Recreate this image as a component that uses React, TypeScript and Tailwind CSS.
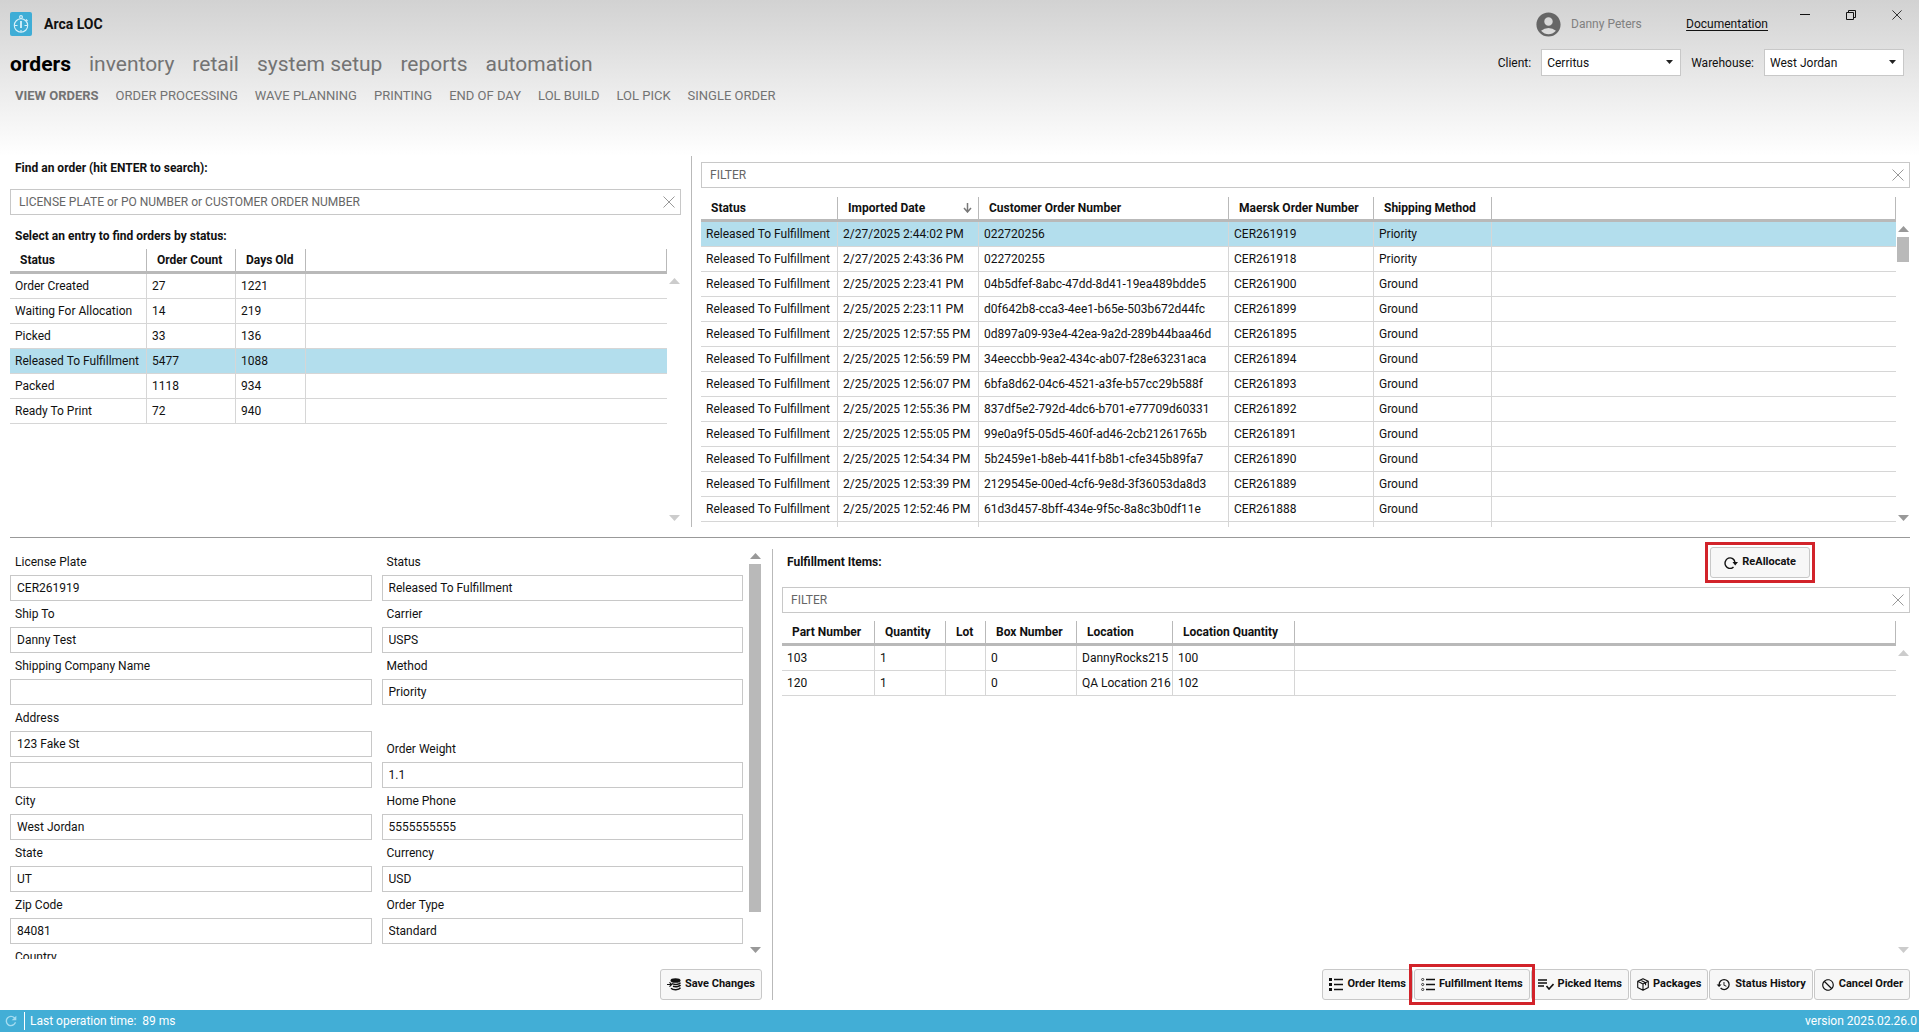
import React, { useId } from 'react';
import { MdAccountCircle, MdBlock, MdHistory, MdRefresh } from 'react-icons/md';

type Column = { label: string; width: string; sorted?: boolean };

const mainNav = ['orders', 'inventory', 'retail', 'system setup', 'reports', 'automation'];

const subNav = [
  'VIEW ORDERS',
  'ORDER PROCESSING',
  'WAVE PLANNING',
  'PRINTING',
  'END OF DAY',
  'LOL BUILD',
  'LOL PICK',
  'SINGLE ORDER',
];

const statusColumns: Column[] = [
  { label: 'Status', width: 'w-[137px]' },
  { label: 'Order Count', width: 'w-[89px]' },
  { label: 'Days Old', width: 'w-[70px]' },
];

const statusRows = [
  ['Order Created', '27', '1221'],
  ['Waiting For Allocation', '14', '219'],
  ['Picked', '33', '136'],
  ['Released To Fulfillment', '5477', '1088'],
  ['Packed', '1118', '934'],
  ['Ready To Print', '72', '940'],
];

const orderColumns: Column[] = [
  { label: 'Status', width: 'w-[137px]' },
  { label: 'Imported Date', width: 'w-[141px]', sorted: true },
  { label: 'Customer Order Number', width: 'w-[250px]' },
  { label: 'Maersk Order Number', width: 'w-[145px]' },
  { label: 'Shipping Method', width: 'w-[118px]' },
];

const orderRows = [
  ['Released To Fulfillment', '2/27/2025 2:44:02 PM', '022720256', 'CER261919', 'Priority'],
  ['Released To Fulfillment', '2/27/2025 2:43:36 PM', '022720255', 'CER261918', 'Priority'],
  ['Released To Fulfillment', '2/25/2025 2:23:41 PM', '04b5dfef-8abc-47dd-8d41-19ea489bdde5', 'CER261900', 'Ground'],
  ['Released To Fulfillment', '2/25/2025 2:23:11 PM', 'd0f642b8-cca3-4ee1-b65e-503b672d44fc', 'CER261899', 'Ground'],
  ['Released To Fulfillment', '2/25/2025 12:57:55 PM', '0d897a09-93e4-42ea-9a2d-289b44baa46d', 'CER261895', 'Ground'],
  ['Released To Fulfillment', '2/25/2025 12:56:59 PM', '34eeccbb-9ea2-434c-ab07-f28e63231aca', 'CER261894', 'Ground'],
  ['Released To Fulfillment', '2/25/2025 12:56:07 PM', '6bfa8d62-04c6-4521-a3fe-b57cc29b588f', 'CER261893', 'Ground'],
  ['Released To Fulfillment', '2/25/2025 12:55:36 PM', '837df5e2-792d-4dc6-b701-e77709d60331', 'CER261892', 'Ground'],
  ['Released To Fulfillment', '2/25/2025 12:55:05 PM', '99e0a9f5-05d5-460f-ad46-2cb21261765b', 'CER261891', 'Ground'],
  ['Released To Fulfillment', '2/25/2025 12:54:34 PM', '5b2459e1-b8eb-441f-b8b1-cfe345b89fa7', 'CER261890', 'Ground'],
  ['Released To Fulfillment', '2/25/2025 12:53:39 PM', '2129545e-00ed-4cf6-9e8d-3f36053da8d3', 'CER261889', 'Ground'],
  ['Released To Fulfillment', '2/25/2025 12:52:46 PM', '61d3d457-8bff-434e-9f5c-8a8c3b0df11e', 'CER261888', 'Ground'],
  ['', '', '', '', ''],
];

const itemColumns: Column[] = [
  { label: 'Part Number', width: 'w-[93px]' },
  { label: 'Quantity', width: 'w-[71px]' },
  { label: 'Lot', width: 'w-[40px]' },
  { label: 'Box Number', width: 'w-[91px]' },
  { label: 'Location', width: 'w-[96px]' },
  { label: 'Location Quantity', width: 'w-[122px]' },
];

const itemRows = [
  ['103', '1', '', '0', 'DannyRocks215', '100'],
  ['120', '1', '', '0', 'QA Location 216', '102'],
];

function LogoIcon() {
  return (
    <svg width="22" height="24" viewBox="0 0 22 24" aria-hidden="true">
      <rect width="22" height="24" rx="2" fill="#3fadd6" />
      <g fill="none" stroke="#d9f1fa" strokeWidth="1.1">
        <circle cx="11" cy="13.5" r="6.7" />
        <circle cx="11" cy="5" r="1.4" />
        <path d="M11 18v2M4.500 13.500h3M14.500 13.500h3M16 7.500l1.500 1.500" />
      </g>
      <path d="M11 9v7" stroke="#d9f1fa" strokeWidth="1.800" />
    </svg>
  );
}

function CloseIcon({ size, color }: { size: number; color: string }) {
  return (
    <svg width={size} height={size} viewBox="0 0 12 12" fill="none" stroke={color} aria-hidden="true">
      <path d="M.5.5l11 11M11.5.5l-11 11" />
    </svg>
  );
}

function ListIcon({ hollow }: { hollow?: boolean }) {
  return (
    <svg width="14" height="13" viewBox="0 0 14 13" stroke="#111" fill="none" aria-hidden="true">
      <path d="M5 1.5h9M5 6.5h9M5 11.5h9" strokeWidth="1.3" />
      {[1.5, 6.5, 11.5].map((y) =>
        hollow ? (
          <circle key={y} cx="1.7" cy={y} r="1.1" strokeWidth=".8" />
        ) : (
          <rect key={y} x="0" y={y - 1.5} width="3" height="3" fill="#111" stroke="none" />
        )
      )}
    </svg>
  );
}

function CheckListIcon() {
  return (
    <svg width="16" height="11" viewBox="0 0 16 11" stroke="#111" fill="none" aria-hidden="true">
      <path d="M0 1h9M0 4h9M0 7h6" strokeWidth="1.3" />
      <path d="M8.5 7l2.5 3 4.5-5" strokeWidth="1.6" />
    </svg>
  );
}

function BoxIcon() {
  return (
    <svg width="12" height="13" viewBox="0 0 12 13" stroke="#111" fill="none" strokeLinejoin="round" aria-hidden="true">
      <path d="M6 .7l5.3 2.6v6.2L6 12.3.7 9.500V3.300zM.7 3.300L6 6l5.300-2.700M6 6v6.300M3.300 2l5.300 2.700v2.500" strokeWidth="1.1" />
    </svg>
  );
}

function ReloadIcon() {
  return (
    <svg width="14" height="13" viewBox="0 0 14 13" stroke="#111" fill="none" aria-hidden="true">
      <path d="M9.500 11A5 5.300 0 1 1 11 6.500" strokeWidth="1.400" />
      <path d="M8.500 6h5.500L11.200 9.500z" fill="#111" stroke="none" />
    </svg>
  );
}

function SaveIcon() {
  return (
    <svg width="14" height="13" viewBox="0 0 14 13" aria-hidden="true">
      <ellipse cx="8.500" cy="2.500" rx="5" ry="2.300" fill="#111" />
      <g fill="none" stroke="#111" strokeWidth="1.500">
        <path d="M5 5.500c2 1.500 7 1.300 8.500-.8M6 8.300c2 .8 6 .5 7.500-1.200M4 10.300c2 2 8 2 9.500-.6" />
        <path d="M0 6.500h4.500M2.500 4.300l2.200 2.200-2.200 2.200" strokeWidth="1.200" />
      </g>
    </svg>
  );
}

function Arrow({ down, active }: { down?: boolean; active?: boolean }) {
  return (
    <svg width="11" height="6" viewBox="0 0 11 6" className={active ? 'fill-[#999]' : 'fill-[#ccc]'} aria-hidden="true">
      <path d={down ? 'M0 0h11L5.500 6z' : 'M0 6h11L5.500 0z'} />
    </svg>
  );
}

function Scrollbar({ thumb }: { thumb?: string }) {
  return (
    <div className="flex w-3 shrink-0 flex-col items-center pt-1 pb-1.5">
      <Arrow active={!!thumb} />
      <div className="min-h-0 w-full flex-1 py-[5px]">
        {thumb && <div className={`w-full bg-[#b9b9b9] ${thumb}`} />}
      </div>
      <Arrow down active={!!thumb} />
    </div>
  );
}

function DataTable({ columns, rows, selected }: { columns: Column[]; rows: string[][]; selected?: number }) {
  return (
    <table className="w-full table-fixed border-separate border-spacing-0 text-left text-xs">
      <thead>
        <tr className="h-[25px]">
          {columns.map((col) => (
            <th
              key={col.label}
              scope="col"
              className={`border-r border-b-3 border-[#b9b9b9] pl-2.5 whitespace-nowrap ${col.sorted ? 'pr-1.5' : 'pr-2.5'} ${col.width}`}
            >
              <span className="flex items-center justify-between">
                {col.label}
                {col.sorted && (
                  <svg width="9" height="10" viewBox="0 0 9 10" fill="none" stroke="#777" strokeWidth="1.500" aria-hidden="true">
                    <path d="M4.500 0v9M1 5l3.500 4L8 5" />
                  </svg>
                )}
              </span>
            </th>
          ))}
          <td className="border-r border-b-3 border-[#b9b9b9]" />
        </tr>
      </thead>
      <tbody>
        {rows.map((row, i) => (
          <tr key={i} className={`h-[25px] ${i === selected ? 'bg-[#b3deed]' : ''}`}>
            {row.map((cell, j) => (
              <td key={j} className="border-r border-b border-[#d6d6d6] pl-[5px] whitespace-nowrap">
                {cell}
              </td>
            ))}
            <td className="border-b border-[#d6d6d6]" />
          </tr>
        ))}
      </tbody>
    </table>
  );
}

function SearchBox({ label, placeholder }: { label: string; placeholder: string }) {
  return (
    <div className="flex h-[26px] shrink-0 items-center border border-[#c8c8c8] bg-white pr-[5px]">
      <input
        type="text"
        aria-label={label}
        placeholder={placeholder}
        className="h-full min-w-0 flex-1 px-2 text-xs outline-none placeholder:text-[#666]"
      />
      <button type="button" aria-label="Clear">
        <CloseIcon size={12} color="#999" />
      </button>
    </div>
  );
}

function Field({ label, value = '', className = '' }: { label: string; value?: string; className?: string }) {
  const id = useId();
  return (
    <div className={className}>
      <label htmlFor={id} className="flex h-[26px] items-center px-[5px]">
        {label}
      </label>
      <input id={id} defaultValue={value} className="h-[26px] w-full border border-[#c8c8c8] px-1.5 outline-none" />
    </div>
  );
}

function Picker({ label, value }: { label: string; value: string }) {
  const id = useId();
  return (
    <div className="flex items-center gap-2.5">
      <label htmlFor={id}>{label}</label>
      <div className="relative">
        <select id={id} defaultValue={value} className="h-[27px] w-[140px] appearance-none border border-[#c8c8c8] bg-white px-[5px] outline-none">
          <option>{value}</option>
        </select>
        <svg width="7" height="4" viewBox="0 0 7 4" className="pointer-events-none absolute top-[11px] right-2" aria-hidden="true">
          <path d="M0 0h7L3.500 4z" fill="#222" />
        </svg>
      </div>
    </div>
  );
}

function ActionButton({ icon, children, padding = 'px-1.5' }: { icon: React.ReactNode; children: string; padding?: string }) {
  return (
    <button
      type="button"
      className={`flex h-[31px] items-center gap-1 rounded-[3px] border border-[#c8c8c8] bg-[#f7f7f7] text-[11px] font-bold whitespace-nowrap ${padding}`}
    >
      {icon}
      {children}
    </button>
  );
}

function Header() {
  return (
    <header className="flex h-[156px] shrink-0 justify-between bg-linear-to-b from-[#d2d2d2] to-white">
      <div className="pt-3 pl-2.5">
        <div className="flex h-6 items-center gap-3">
          <LogoIcon />
          <h1 className="text-sm font-bold">Arca LOC</h1>
        </div>
        <nav aria-label="Main" className="mt-3 flex h-8 items-center gap-[18px] text-[21px] text-[#737373]">
          {mainNav.map((item, i) => (
            <a key={item} href="#" className={i === 0 ? 'font-bold text-black' : ''}>
              {item}
            </a>
          ))}
        </nav>
        <nav aria-label="Orders" className="mt-1 flex h-6 items-center gap-[17px] pl-[5px] text-[13px] text-[#737373]">
          {subNav.map((item, i) => (
            <a key={item} href="#" className={i === 0 ? 'font-bold' : ''}>
              {item}
            </a>
          ))}
        </nav>
      </div>

      <div className="flex flex-col items-end">
        <div className="flex h-12 items-center pr-[17px]">
          <MdAccountCircle className="size-[29px] text-[#666]" />
          <span className="ml-2 w-[115px] text-[#808080]">Danny Peters</span>
          <a href="#" className="underline underline-offset-2">
            Documentation
          </a>
          <div className="flex h-full items-start gap-9 pt-2.5 pl-8">
            <button type="button" aria-label="Minimize">
              <svg width="10" height="10" viewBox="0 0 10 10" stroke="#111" aria-hidden="true">
                <path d="M0 4.500h10" />
              </svg>
            </button>
            <button type="button" aria-label="Restore">
              <svg width="10" height="10" viewBox="0 0 10 10" fill="none" stroke="#111" aria-hidden="true">
                <path d="M.5 2.500h7v7h-7zM2.500 2.500v-2h7v7h-2" />
              </svg>
            </button>
            <button type="button" aria-label="Close">
              <CloseIcon size={10} color="#111" />
            </button>
          </div>
        </div>
        <div className="flex items-center gap-2.5 pt-px pr-[15px]">
          <Picker label="Client:" value="Cerritus" />
          <Picker label="Warehouse:" value="West Jordan" />
        </div>
      </div>
    </header>
  );
}

function OrderForm() {
  return (
    <div className="flex min-h-0 flex-1 gap-1.5 pr-px">
      <div className="grid min-w-0 flex-1 grid-cols-2 gap-2.5 overflow-hidden">
        <div>
          <Field label="License Plate" value="CER261919" />
          <Field label="Ship To" value="Danny Test" />
          <Field label="Shipping Company Name" />
          <Field label="Address" value="123 Fake St" />
          <input aria-label="Address line 2" className="mt-[5px] block h-[26px] w-full border border-[#c8c8c8] px-1.5 outline-none" />
          <Field label="City" value="West Jordan" />
          <Field label="State" value="UT" />
          <Field label="Zip Code" value="84081" />
          <Field label="Country" />
        </div>
        <div>
          <Field label="Status" value="Released To Fulfillment" />
          <Field label="Carrier" value="USPS" />
          <Field label="Method" value="Priority" />
          <Field label="Order Weight" value="1.1" className="mt-[31px]" />
          <Field label="Home Phone" value="5555555555" />
          <Field label="Currency" value="USD" />
          <Field label="Order Type" value="Standard" />
        </div>
      </div>
      <Scrollbar thumb="h-[92%]" />
    </div>
  );
}

export default function App() {
  return (
    <div className="flex h-screen flex-col overflow-hidden bg-white font-['Roboto',sans-serif] text-xs text-[#111]">
      <Header />

      <main className="grid min-h-0 flex-1 grid-rows-[382fr_472fr]">
        <div className="mr-[9px] ml-2.5 grid min-h-0 grid-cols-[682fr_1218fr] border-b border-[#999] pb-2.5">
          <section className="flex min-h-0 flex-col border-r border-[#b9b9b9] pr-2.5">
            <h2 className="flex h-6 shrink-0 items-center pl-[5px] font-bold">Find an order (hit ENTER to search):</h2>
            <div className="mt-[9px]">
              <SearchBox label="Find an order" placeholder="LICENSE PLATE or PO NUMBER or CUSTOMER ORDER NUMBER" />
            </div>
            <h2 className="mt-2 flex h-[26px] shrink-0 items-center pl-[5px] font-bold">Select an entry to find orders by status:</h2>
            <div className="flex min-h-0 flex-1 gap-px pr-px">
              <div className="min-w-0 flex-1 overflow-hidden">
                <DataTable columns={statusColumns} rows={statusRows} selected={3} />
              </div>
              <div className="flex pt-[25px]">
                <Scrollbar />
              </div>
            </div>
          </section>

          <section className="flex min-h-0 flex-col pt-1.5 pl-[9px]">
            <SearchBox label="Filter orders" placeholder="FILTER" />
            <div className="mt-[9px] flex min-h-0 flex-1 gap-px pr-px">
              <div className="min-w-0 flex-1 overflow-hidden">
                <DataTable columns={orderColumns} rows={orderRows} selected={0} />
              </div>
              <div className="flex pt-[25px]">
                <Scrollbar thumb="h-[25px]" />
              </div>
            </div>
          </section>
        </div>

        <div className="mr-[9px] ml-2.5 grid min-h-0 grid-cols-[763fr_1137fr] pt-[11px] pb-2.5">
          <section className="flex min-h-0 flex-col border-r border-[#b9b9b9] pr-2.5">
            <OrderForm />
            <div className="mt-2.5 flex justify-end">
              <ActionButton icon={<SaveIcon />}>Save Changes</ActionButton>
            </div>
          </section>

          <section className="flex min-h-0 flex-col pl-[9px]">
            <div className="flex h-[38px] shrink-0 justify-between pr-[100px]">
              <h2 className="flex h-[26px] items-center pl-[5px] font-bold">Fulfillment Items:</h2>
              <div className="-mt-0.5 self-start outline-3 outline-offset-2 outline-[#d2232a]">
                <ActionButton icon={<ReloadIcon />} padding="px-[13px]">
                  ReAllocate
                </ActionButton>
              </div>
            </div>
            <SearchBox label="Filter fulfillment items" placeholder="FILTER" />
            <div className="mt-2 flex min-h-0 flex-1 gap-px pr-px">
              <div className="min-w-0 flex-1 overflow-hidden">
                <DataTable columns={itemColumns} rows={itemRows} />
              </div>
              <div className="flex pt-[25px]">
                <Scrollbar />
              </div>
            </div>
            <div className="mt-2.5 flex justify-end gap-px">
              <ActionButton icon={<ListIcon />}>Order Items</ActionButton>
              <div className="z-10 outline-3 outline-offset-2 outline-[#d2232a]">
                <ActionButton icon={<ListIcon hollow />}>Fulfillment Items</ActionButton>
              </div>
              <ActionButton icon={<CheckListIcon />}>Picked Items</ActionButton>
              <ActionButton icon={<BoxIcon />}>Packages</ActionButton>
              <ActionButton icon={<MdHistory size={15} />}>Status History</ActionButton>
              <ActionButton icon={<MdBlock size={14} className="-scale-x-100" />}>Cancel Order</ActionButton>
            </div>
          </section>
        </div>
      </main>

      <footer className="flex h-[22px] shrink-0 items-center bg-[#42aed6] pr-0.5 pl-[3px] text-white">
        <MdRefresh size={16} className="text-[#a5dcf0]" />
        <div className="ml-[5px] h-[18px] w-px bg-white" />
        <span className="ml-[5px]">Last operation time:&nbsp; 89 ms</span>
        <span className="ml-auto">version 2025.02.26.0</span>
      </footer>
    </div>
  );
}
